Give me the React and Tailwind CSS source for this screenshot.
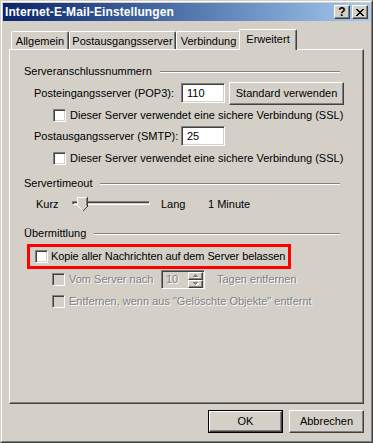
import React from "react";

const raised =
  "border border-t-white border-l-white border-r-[#404040] border-b-[#404040] shadow-[inset_-1px_-1px_0_#808080]";
const sunken =
  "border border-t-[#808080] border-l-[#808080] border-r-white border-b-white shadow-[inset_1px_1px_0_#404040,inset_-1px_-1px_0_#d4d0c8]";
const grayText = "text-[#808080] [text-shadow:1px_1px_0_#ffffff]";

const Checkbox = ({ disabled }) => (
  <div className={`w-[13px] h-[13px] shrink-0 ${sunken} ${disabled ? "bg-[#d4d0c8]" : "bg-white"}`} />
);

const GroupHeader = ({ children }) => (
  <div className="flex items-center h-[13px] mr-[23px]">
    <span className="whitespace-nowrap">{children}</span>
    <div className="flex-1 ml-[8px] h-[2px] border-t border-b border-t-[#808080] border-b-white" />
  </div>
);

const CloseGlyph = () => (
  <svg width="8" height="7" viewBox="0 0 8 7" shapeRendering="crispEdges">
    <path d="M0 0h2v1H0zM6 0h2v1H6zM1 1h2v1H1zM5 1h2v1H5zM2 2h4v1H2zM3 3h2v1H3zM2 4h4v1H2zM1 5h2v1H1zM5 5h2v1H5zM0 6h2v1H0zM6 6h2v1H6z" fill="#000" />
  </svg>
);

const Arrow = ({ up }) => (
  <svg width="6" height="4" viewBox="0 0 6 4" shapeRendering="crispEdges">
    {up ? (
      <>
        <path d="M3 1h1v1H3zM2 2h3v1H2zM1 3h5v1H1z" fill="#fff" />
        <path d="M2 0h1v1H2zM1 1h3v1H1zM0 2h5v1H0z" fill="#808080" />
      </>
    ) : (
      <>
        <path d="M1 1h5v1H1zM2 2h3v1H2zM3 3h1v1H3z" fill="#fff" />
        <path d="M0 0h5v1H0zM1 1h3v1H1zM2 2h1v1H2z" fill="#808080" />
      </>
    )}
  </svg>
);

const Thumb = () => (
  <svg width="11" height="14" viewBox="0 0 11 14" shapeRendering="crispEdges" className="absolute left-[5px] top-0">
    <path d="M0 0H10V9L5 14L0 9Z" fill="#d4d0c8" />
    <path d="M0 0h10v1H0zM0 0h1v9H0z" fill="#fff" />
    <path d="M10 0h1v9h-1z" fill="#404040" />
    <path d="M9 1h1v8H9z" fill="#808080" />
    <path d="M10 9h1v1h-1zM9 10h1v1H9zM8 11h1v1H8zM7 12h1v1H7zM6 13h1v1H6z" fill="#404040" />
    <path d="M1 9h1v1H1zM2 10h1v1H2zM3 11h1v1H3zM4 12h1v1H4z" fill="#fff" />
  </svg>
);

const tabs = [
  { label: "Allgemein", w: "w-[58px]" },
  { label: "Postausgangsserver", w: "w-[107px]" },
  { label: "Verbindung", w: "w-[65px]" },
];

export default function App() {
  return (
    <div className="w-[373px] h-[443px] bg-[#d4d0c8] font-['Liberation_Sans',Arial,sans-serif] text-[11px] leading-[13px] text-black border border-t-[#d4d0c8] border-l-[#d4d0c8] border-r-[#404040] border-b-[#404040]">
      <div className="h-full p-px border border-t-white border-l-white border-r-[#808080] border-b-[#808080] flex flex-col">
        {/* title bar */}
        <div className="h-[18px] shrink-0 flex items-center bg-linear-to-r from-[#0a246a] to-[#a6caf0] pl-[2px] pr-[2px]">
          <span className="flex-1 text-white font-bold text-[12px] tracking-[0.1px]">Internet-E-Mail-Einstellungen</span>
          <div className={`w-[16px] h-[14px] bg-[#d4d0c8] flex items-center justify-center font-bold text-[12px] leading-none ${raised}`}>?</div>
          <div className={`ml-[2px] w-[16px] h-[14px] bg-[#d4d0c8] flex items-center justify-center ${raised}`}>
            <CloseGlyph />
          </div>
        </div>

        <div className="flex-1 flex flex-col px-[6px]">
          {/* tabs */}
          <div className="mt-[8px] h-[20px] flex items-end pl-[2px]">
            {tabs.map((t) => (
              <div key={t.label} className={`${t.w} h-[18px] pt-[2px] flex items-center justify-center border-t border-l border-r border-t-white border-l-white border-r-[#404040] shadow-[inset_-1px_0_0_#808080] rounded-t-[2px]`}>
                {t.label}
              </div>
            ))}
            <div className="relative z-10 -ml-[2px] -mb-px w-[58px] h-[21px] pb-[2px] flex items-center justify-center bg-[#d4d0c8] border-t border-l border-r border-t-white border-l-white border-r-[#404040] shadow-[inset_-1px_0_0_#808080] rounded-t-[2px]">
              Erweitert
            </div>
          </div>

          {/* panel */}
          <div className={`h-[355px] shrink-0 pl-[14px] flex flex-col ${raised}`}>
            <div className="mt-[15px]">
              <GroupHeader>Serveranschlussnummern</GroupHeader>
            </div>
            <div className="mt-[4px] h-[22px] flex items-center pl-[10px]">
              <span className="w-[147px] shrink-0">Posteingangsserver (POP3):</span>
              <div className={`w-[44px] h-[20px] shrink-0 bg-white pl-[5px] flex items-center ${sunken}`}>110</div>
              <div className={`ml-[4px] w-[115px] h-[23px] shrink-0 flex items-center justify-center ${raised}`}>Standard verwenden</div>
            </div>
            <div className="mt-[5px] h-[13px] flex items-center pl-[29px]">
              <Checkbox />
              <span className="ml-[4px] whitespace-nowrap">Dieser Server verwendet eine sichere Verbindung (SSL)</span>
            </div>
            <div className="mt-[4px] h-[20px] flex items-center pl-[10px]">
              <span className="w-[147px] shrink-0">Postausgangsserver (SMTP):</span>
              <div className={`w-[44px] h-[20px] shrink-0 bg-white pl-[5px] flex items-center ${sunken}`}>25</div>
            </div>
            <div className="mt-[6px] h-[13px] flex items-center pl-[29px]">
              <Checkbox />
              <span className="ml-[4px] whitespace-nowrap">Dieser Server verwendet eine sichere Verbindung (SSL)</span>
            </div>

            <div className="mt-[12px]">
              <GroupHeader>Servertimeout</GroupHeader>
            </div>
            <div className="mt-[7px] h-[14px] flex items-center pl-[12px]">
              <span className="w-[36px] shrink-0">Kurz</span>
              <div className="relative w-[78px] h-[14px] shrink-0">
                <div className="mt-[4px] h-[4px] border border-t-[#808080] border-l-[#808080] border-r-white border-b-white shadow-[inset_1px_1px_0_#404040]" />
                <Thumb />
              </div>
              <span className="ml-[11px] w-[47px] shrink-0">Lang</span>
              <span>1 Minute</span>
            </div>

            <div className="mt-[16px]">
              <GroupHeader>Übermittlung</GroupHeader>
            </div>
            <div className="mt-[4px] ml-[3px] w-[264px] h-[25px] border-[3px] border-[#ff0000] flex items-center pl-[5px]">
              <Checkbox />
              <span className="ml-[3px] whitespace-nowrap tracking-[-0.1px]">Kopie aller Nachrichten auf dem Server belassen</span>
            </div>
            <div className="mt-px h-[19px] flex items-center pl-[28px]">
              <Checkbox disabled />
              <span className={`ml-[4px] w-[92px] shrink-0 whitespace-nowrap ${grayText}`}>Vom Server nach</span>
              <div className={`w-[44px] h-[19px] shrink-0 flex items-center pl-[4px] pr-px ${sunken}`}>
                <span className={`flex-1 ${grayText}`}>10</span>
                <div className="flex flex-col">
                  <div className={`w-[15px] h-[8px] flex items-center justify-center ${raised}`}>
                    <Arrow up />
                  </div>
                  <div className={`w-[15px] h-[8px] flex items-center justify-center ${raised}`}>
                    <Arrow />
                  </div>
                </div>
              </div>
              <span className={`ml-[12px] whitespace-nowrap ${grayText}`}>Tagen entfernen</span>
            </div>
            <div className="mt-[6px] h-[13px] flex items-center pl-[28px]">
              <Checkbox disabled />
              <span className={`ml-[4px] whitespace-nowrap ${grayText}`}>Entfernen, wenn aus "Gelöschte Objekte" entfernt</span>
            </div>
          </div>

          {/* buttons */}
          <div className="mt-[6px] flex justify-end gap-[6px]">
            <div className="w-[75px] h-[23px] border border-black">
              <div className={`h-full flex items-center justify-center ${raised}`}>OK</div>
            </div>
            <div className={`w-[75px] h-[23px] flex items-center justify-center ${raised}`}>Abbrechen</div>
          </div>
        </div>
      </div>
    </div>
  );
}
